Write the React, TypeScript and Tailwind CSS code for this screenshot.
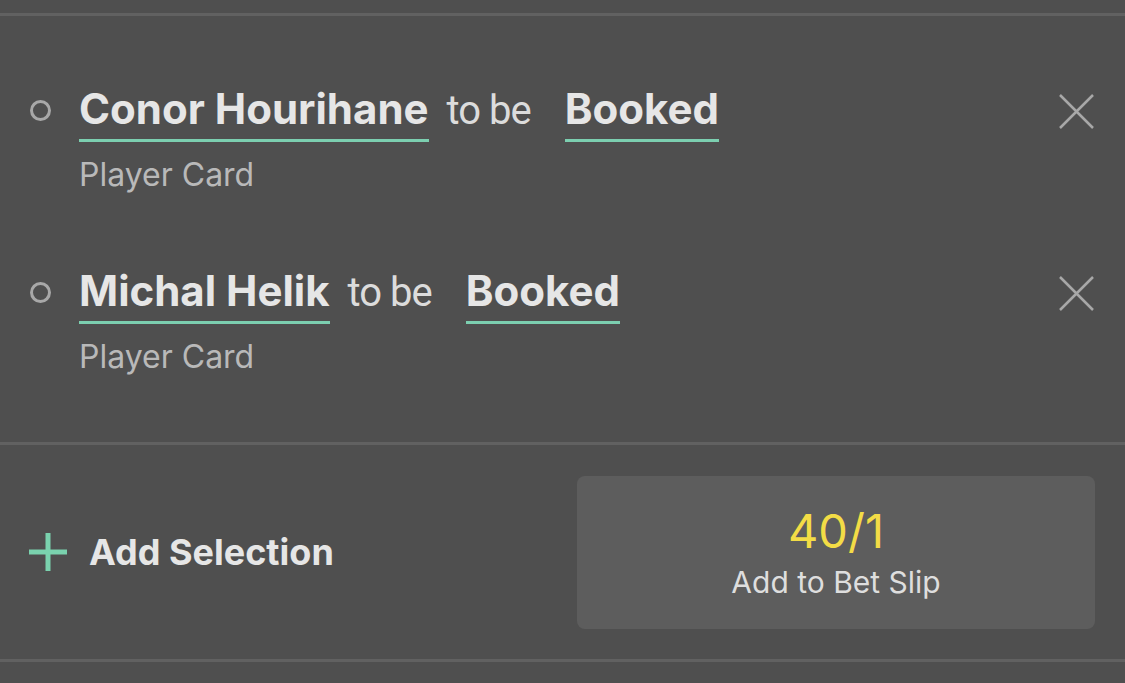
type Selection = {
  id: number;
  player: string;
  outcome: string;
  market: string;
};

const SELECTIONS: Selection[] = [
  { id: 1, player: 'Conor Hourihane', outcome: 'Booked', market: 'Player Card' },
  { id: 2, player: 'Michal Helik', outcome: 'Booked', market: 'Player Card' },
];

const Underlined = ({ children }: { children: string }) => (
  <span className="font-bold text-[#e6e6e6] border-b-[3px] border-[#7ccfb0] pb-[9px] leading-none">
    {children}
  </span>
);

const SelectionRow = ({ s }: { s: Selection }) => (
  <div className="flex items-start pl-[30px] pr-[30px]">
    <div className="w-[21px] h-[21px] mt-[12px] rounded-full border-[3px] border-[#a8a8a8] shrink-0" />
    <div className="ml-[28px] flex-1">
      <div className="flex items-baseline text-[42px]">
        <Underlined>{s.player}</Underlined>
        <span
          className="ml-[18px] mr-[34px] text-[40px] font-normal tracking-[-1px] text-[#dcdcdc] leading-none"
          style={{ fontFamily: 'Roboto, Inter, sans-serif' }}
        >
          to be
        </span>
        <Underlined>{s.outcome}</Underlined>
      </div>
      <div className="mt-[17px] text-[32px] leading-none text-[#b9b9b9]">{s.market}</div>
    </div>
    <button className="mt-[5px] shrink-0">
      <svg width="37" height="37" viewBox="0 0 37 37">
        <path d="M2 2 L35 35 M35 2 L2 35" stroke="#a8a8a8" strokeWidth="2.5" />
      </svg>
    </button>
  </div>
);

export default function App() {
  return (
    <div
      className="w-full h-[683px] bg-[#4f4f4f] flex flex-col overflow-hidden"
      style={{ fontFamily: 'Inter, "Noto Sans", sans-serif' }}
    >
      <div className="h-[13px]" />
      <div className="h-[3px] bg-[#616161]" />

      <div className="flex flex-col gap-[79px] pt-[72px] h-[426px]">
        {SELECTIONS.map((s) => (
          <SelectionRow key={s.id} s={s} />
        ))}
      </div>

      <div className="h-[3px] bg-[#616161]" />

      <div className="flex items-center h-[214px] pl-[29px] pr-[30px]">
        <div className="flex items-center flex-1">
          <svg width="38" height="38" viewBox="0 0 38 38" className="shrink-0">
            <path d="M19 0 V38 M0 19 H38" stroke="#7ad2ae" strokeWidth="5" />
          </svg>
          <span className="ml-[22px] text-[36px] font-bold text-[#e6e6e6]">Add Selection</span>
        </div>
        <button className="w-[518px] h-[153px] rounded-[8px] bg-[#5d5d5d] flex flex-col items-center justify-center">
          <span className="text-[47px] leading-none text-[#f3dc46]">40/1</span>
          <span className="mt-[13px] text-[30px] leading-none text-[#dedede]">Add to Bet Slip</span>
        </button>
      </div>

      <div className="h-[3px] bg-[#616161]" />
    </div>
  );
}
